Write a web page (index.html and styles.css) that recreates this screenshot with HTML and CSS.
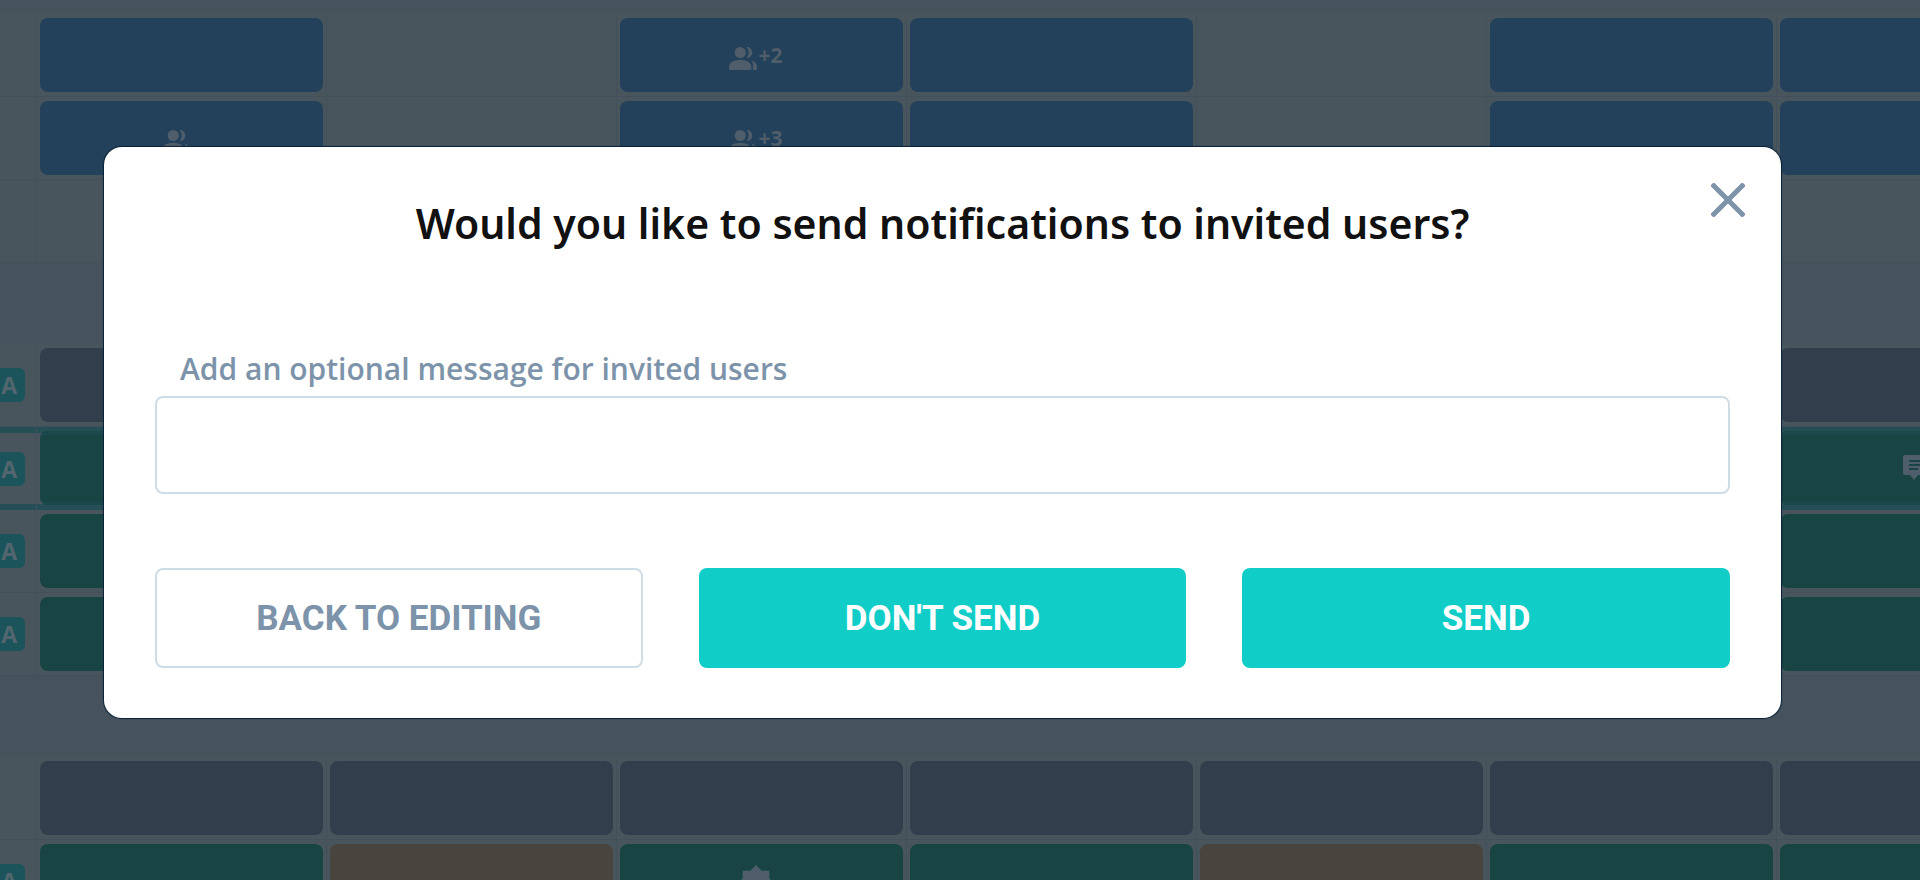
FILE: index.html
```html
<!DOCTYPE html>
<html lang="en">
<head>
  <meta charset="UTF-8">
  <meta name="viewport" content="width=device-width, initial-scale=1.0">
  <title>Schedule</title>
  <link rel="stylesheet" href="styles.css">
</head>
<body>
  <svg class="sprite" aria-hidden="true">
    <symbol id="icon-people" viewBox="0 0 30 26">
      <circle cx="12" cy="7" r="6"/>
      <path d="M0 26v-4c0-4 6-7 12-7s12 3 12 7v4z"/>
      <path d="M19 1c4 0 6 3 6 6s-2 6-6 6c3-4 3-8 0-12zM24 16c4 1 6 3 6 6v4h-4v-4c0-3-1-5-2-6z"/>
    </symbol>
    <symbol id="icon-comment" viewBox="0 0 26 26">
      <path fill-rule="evenodd" d="M2 0h22a2 2 0 0 1 2 2v16a2 2 0 0 1-2 2h-9l-4 5-4-5H2a2 2 0 0 1-2-2V2a2 2 0 0 1 2-2zM6 5v2h14V5zM6 9v2h14V9zM6 13v2h9v-2z"/>
    </symbol>
    <symbol id="icon-star" viewBox="0 0 40 40">
      <path d="M20 0l6 6h8v8l6 6-6 6v8h-8l-6 6-6-6H6v-8l-6-6 6-6V6h8z"/>
    </symbol>
  </svg>

  <main class="schedule">
    <section class="group">
      <div class="row">
        <div class="cell side"></div>
        <div class="cell"><div class="shift blue"></div></div>
        <div class="cell"></div>
        <div class="cell"><div class="shift blue"><svg class="people"><use href="#icon-people"/></svg>+2</div></div>
        <div class="cell"><div class="shift blue"></div></div>
        <div class="cell"></div>
        <div class="cell"><div class="shift blue"></div></div>
        <div class="cell"><div class="shift blue"></div></div>
      </div>
      <div class="row">
        <div class="cell side"></div>
        <div class="cell"><div class="shift blue"><svg class="people"><use href="#icon-people"/></svg></div></div>
        <div class="cell"></div>
        <div class="cell"><div class="shift blue"><svg class="people"><use href="#icon-people"/></svg>+3</div></div>
        <div class="cell"><div class="shift blue"></div></div>
        <div class="cell"></div>
        <div class="cell"><div class="shift blue"></div></div>
        <div class="cell"><div class="shift blue"></div></div>
      </div>
      <div class="row">
        <div class="cell side"></div>
        <div class="cell"></div>
        <div class="cell"></div>
        <div class="cell"></div>
        <div class="cell"></div>
        <div class="cell"></div>
        <div class="cell"></div>
        <div class="cell"></div>
      </div>
    </section>

    <section class="group">
      <div class="row">
        <div class="cell side"><span class="badge">A</span></div>
        <div class="cell"><div class="shift slate"></div></div>
        <div class="cell"><div class="shift slate"></div></div>
        <div class="cell"><div class="shift slate"></div></div>
        <div class="cell"><div class="shift slate"></div></div>
        <div class="cell"><div class="shift slate"></div></div>
        <div class="cell"><div class="shift slate"></div></div>
        <div class="cell"><div class="shift slate"></div></div>
      </div>
      <div class="row selected">
        <div class="cell side"><span class="badge">A</span></div>
        <div class="cell"><div class="shift green"></div></div>
        <div class="cell"><div class="shift green"></div></div>
        <div class="cell"><div class="shift green"></div></div>
        <div class="cell"><div class="shift green"></div></div>
        <div class="cell"><div class="shift green"></div></div>
        <div class="cell"><div class="shift green"></div></div>
        <div class="cell"><div class="shift green"><svg class="comment"><use href="#icon-comment"/></svg></div></div>
      </div>
      <div class="row">
        <div class="cell side"><span class="badge">A</span></div>
        <div class="cell"><div class="shift green"></div></div>
        <div class="cell"><div class="shift green"></div></div>
        <div class="cell"><div class="shift green"></div></div>
        <div class="cell"><div class="shift green"></div></div>
        <div class="cell"><div class="shift green"></div></div>
        <div class="cell"><div class="shift green"></div></div>
        <div class="cell"><div class="shift green"></div></div>
      </div>
      <div class="row">
        <div class="cell side"><span class="badge">A</span></div>
        <div class="cell"><div class="shift green"></div></div>
        <div class="cell"><div class="shift green"></div></div>
        <div class="cell"><div class="shift green"></div></div>
        <div class="cell"><div class="shift green"></div></div>
        <div class="cell"><div class="shift green"></div></div>
        <div class="cell"><div class="shift green"></div></div>
        <div class="cell"><div class="shift green"></div></div>
      </div>
    </section>

    <section class="group">
      <div class="row">
        <div class="cell side"></div>
        <div class="cell"><div class="shift slate"></div></div>
        <div class="cell"><div class="shift slate"></div></div>
        <div class="cell"><div class="shift slate"></div></div>
        <div class="cell"><div class="shift slate"></div></div>
        <div class="cell"><div class="shift slate"></div></div>
        <div class="cell"><div class="shift slate"></div></div>
        <div class="cell"><div class="shift slate"></div></div>
      </div>
      <div class="row">
        <div class="cell side"><span class="badge">A</span></div>
        <div class="cell"><div class="shift green"></div></div>
        <div class="cell"><div class="shift brown"></div></div>
        <div class="cell"><div class="shift green"><svg class="star"><use href="#icon-star"/></svg></div></div>
        <div class="cell"><div class="shift green"></div></div>
        <div class="cell"><div class="shift brown"></div></div>
        <div class="cell"><div class="shift green"></div></div>
        <div class="cell"><div class="shift green"></div></div>
      </div>
    </section>
  </main>

  <div class="overlay">
    <form class="modal" role="dialog" aria-modal="true" aria-labelledby="modal-title">
      <button type="button" class="close" aria-label="Close">
        <svg viewBox="0 0 34 34"><path d="M1 1l32 32M33 1L1 33"/></svg>
      </button>
      <h1 id="modal-title">Would you like to send notifications to invited users?</h1>
      <label for="message">Add an optional message for invited users</label>
      <input type="text" id="message">
      <div class="actions">
        <button type="button" class="btn btn-outline">BACK TO EDITING</button>
        <button type="button" class="btn">DON'T SEND</button>
        <button type="submit" class="btn">SEND</button>
      </div>
    </form>
  </div>
</body>
</html>
```

FILE: styles.css
```css
:root {
  --page-bg: #46525c;
  --row-bg: #49555d;
  --line: #434f5a;
  --muted: #7c93aa;
  --border: #d0dce5;
  --accent: #11cdc8;
}
* { box-sizing: border-box; margin: 0; padding: 0; }
body {
  font-family: "Open Sans", sans-serif;
  background-color: var(--page-bg);
  height: 100vh;
  overflow: hidden;
}
.sprite { display: none; }

/* schedule behind the dialog */
.schedule {
  display: flex;
  flex-direction: column;
  gap: 81px;
  height: 100%;
  padding-top: 14px;
  overflow: hidden;
}
.group { flex-shrink: 0; }
.row {
  display: grid;
  grid-template-columns: 36px repeat(7, 290px);
  height: 83px;
  background-color: var(--row-bg);
}
.cell {
  padding: 4px 3px;
  border-left: 1px solid var(--line);
  border-bottom: 1px solid var(--line);
}
.side {
  display: flex;
  align-items: center;
  justify-content: flex-end;
  padding-right: 11px;
  border-left: none;
}
.shift {
  display: flex;
  align-items: center;
  justify-content: center;
  height: 74px;
  padding-right: 12px;
  border-radius: 8px;
  color: #4f5e6a;
  font-size: 21px;
  font-weight: 700;
}
.shift svg { fill: currentColor; }
.blue { background-color: #23415a; }
.slate { background-color: #313f4d; }
.green { background-color: #194444; }
.brown { background-color: #4a443e; }
.people {
  width: 30px;
  height: 24px;
  margin-top: 6px;
}
.comment { width: 26px; height: 26px; }
.star {
  width: 38px;
  height: 38px;
  margin-top: 6px;
}
.badge {
  padding: 0 8px;
  border-radius: 6px;
  background-color: #1b555b;
  color: #53666f;
  font-size: 23px;
  font-weight: 700;
  line-height: 34px;
}
.selected { box-shadow: inset 0 6px #264e56, inset 0 -6px #264e56; }
.selected .cell { border-bottom: none; }
.selected .shift { box-shadow: inset 0 4px #1b484b, inset 0 -3px #1b484b; }

/* dialog */
.overlay {
  position: absolute;
  inset: 0;
  padding: 147px 139px 0 104px;
}
.modal {
  position: relative;
  display: flex;
  flex-direction: column;
  padding: 48px 51px 50px;
  border-radius: 18px;
  background-color: #fff;
  box-shadow: 0 0 1px 1px #08213a;
}
.close {
  position: absolute;
  top: 36px;
  right: 36px;
  width: 34px;
  height: 34px;
  border: none;
  background: none;
  cursor: pointer;
}
.close svg {
  display: block;
  stroke: var(--muted);
  stroke-width: 5;
}
.modal h1 {
  margin-bottom: 94px;
  color: #111;
  font-family: "Noto Sans", "Open Sans", sans-serif;
  font-size: 41px;
  font-weight: 600;
  line-height: 56px;
  text-align: center;
}
.modal label {
  margin-bottom: 3px;
  padding-left: 25px;
  color: var(--muted);
  font-size: 30px;
  font-weight: 600;
  line-height: 48px;
}
.modal input {
  height: 98px;
  padding: 0 24px;
  border: 2px solid var(--border);
  border-radius: 8px;
  font: inherit;
  font-size: 30px;
}
.actions {
  display: grid;
  grid-template-columns: repeat(3, 1fr);
  gap: 56px;
  margin-top: 74px;
}
.btn {
  height: 100px;
  border: none;
  border-radius: 8px;
  background-color: var(--accent);
  color: #fff;
  font-family: Roboto, sans-serif;
  font-size: 35px;
  font-weight: 700;
  cursor: pointer;
}
.btn-outline {
  border: 2px solid var(--border);
  background-color: #fff;
  color: var(--muted);
}
```
